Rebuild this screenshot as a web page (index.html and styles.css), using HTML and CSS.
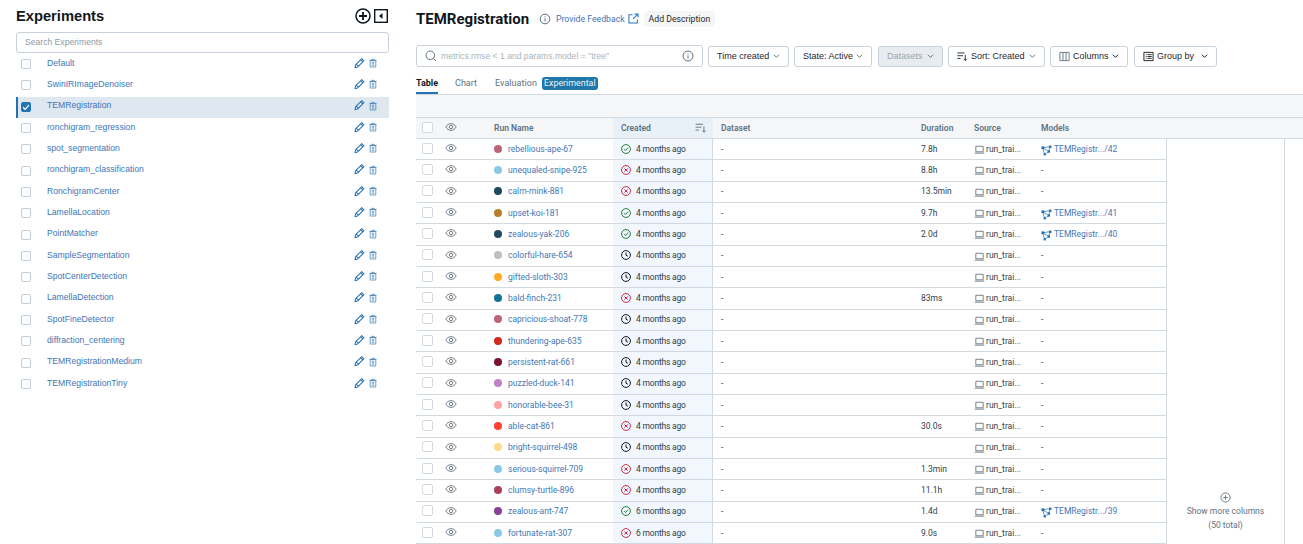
FILE: index.html
```html
<!DOCTYPE html>
<html lang="en">
<head>
  <meta charset="UTF-8" />
  <title>TEMRegistration - Experiments</title>
  <link rel="stylesheet" href="styles.css">
</head>
<body>
  <svg class="defs" width="0" height="0">
    <symbol id="i-pencil" viewBox="0 0 12 12"><path d="M8.4 1.3 10.7 3.6 4 10.3 1.2 10.9 1.7 8zM7.2 2.5 9.5 4.8M2.6 7.3 4.7 9.4" fill="none" stroke="currentColor" stroke-width="1.1"/></symbol>
    <symbol id="i-trash" viewBox="0 0 10 12"><path d="M1.5 3h7v8h-7zM3.5 3V1.4h3V3M.5 2.7h9M3.5 5.2h3M3.5 7h3M3.5 8.8h3" fill="none" stroke="currentColor" stroke-width="1"/></symbol>
    <symbol id="i-eye" viewBox="0 0 14 14"><path d="M1 7c1.400-2.600 3.500-3.900 6-3.900S11.600 4.400 13 7c-1.400 2.600-3.500 3.900-6 3.900S2.400 9.600 1 7z" fill="none" stroke="currentColor"/><circle cx="7" cy="7" r="2" fill="none" stroke="currentColor"/></symbol>
    <symbol id="i-ok" viewBox="0 0 12 12"><circle cx="6" cy="6" r="5.300" fill="none" stroke="currentColor" stroke-width="1.200"/><path d="M3.600 6.100 5.400 7.900 8.500 4.300" fill="none" stroke="currentColor" stroke-width="1.200"/></symbol>
    <symbol id="i-fail" viewBox="0 0 12 12"><circle cx="6" cy="6" r="5.300" fill="none" stroke="currentColor" stroke-width="1.200"/><path d="M4.100 4.100 7.900 7.900M7.900 4.100 4.100 7.900" fill="none" stroke="currentColor" stroke-width="1.200"/></symbol>
    <symbol id="i-clock" viewBox="0 0 12 12"><circle cx="6" cy="6" r="5.300" fill="none" stroke="currentColor" stroke-width="1.200"/><path d="M6 3V6.300L8.200 7.500" fill="none" stroke="currentColor" stroke-width="1.200"/></symbol>
    <symbol id="i-laptop" viewBox="0 0 12 12"><path d="M2 2.500h8v6H2zM.8 10h10.400" fill="none" stroke="currentColor"/></symbol>
    <symbol id="i-model" viewBox="0 0 12 12"><path d="M1.800 3 10 1.800 8.500 7 4 10.200zM1.800 3 8.500 7" fill="none" stroke="currentColor" stroke-width=".8"/><rect x=".5" y="1.500" width="3" height="3" fill="currentColor"/><rect x="8.800" y=".6" width="2.600" height="2.600" fill="currentColor"/><rect x="7.300" y="5.800" width="2.600" height="2.600" fill="currentColor"/><rect x="2.900" y="9" width="2.400" height="2.400" fill="currentColor"/></symbol>
    <symbol id="i-sort" viewBox="0 0 14 12"><path d="M.5 1.500h9M.5 5h7M.5 8.500h4M10.500 4v7M8.500 9l2 2 2-2" fill="none" stroke="currentColor" stroke-width="1.100"/></symbol>
    <symbol id="i-chev" viewBox="0 0 8 6"><path d="M1 1.500 4 4.500 7 1.500" fill="none" stroke="currentColor" stroke-width="1.100"/></symbol>
  </svg>

  <div class="page">
    <aside class="sidebar">
      <div class="side-head">
        <h1>Experiments</h1>
        <div class="side-tools">
          <svg class="add" viewBox="0 0 16 16" width="16" height="16"><circle cx="8" cy="8" r="7" fill="none" stroke="#11171c" stroke-width="1.500"/><path d="M8 4v8M4 8h8" stroke="#11171c" stroke-width="1.800"/></svg>
          <svg viewBox="0 0 14 14" width="14" height="14"><rect x=".7" y=".7" width="12.600" height="12.600" fill="none" stroke="#11171c" stroke-width="1.400"/><path d="M8.500 4v6L5 7z" fill="#11171c"/></svg>
        </div>
      </div>
      <div class="search-exp">Search Experiments</div>
      <ul class="exp-list">
        <li><span class="box"></span><span class="exp-name">Default</span><svg class="pen"><use href="#i-pencil"/></svg><svg class="bin"><use href="#i-trash"/></svg></li>
        <li><span class="box"></span><span class="exp-name">SwinIRImageDenoiser</span><svg class="pen"><use href="#i-pencil"/></svg><svg class="bin"><use href="#i-trash"/></svg></li>
        <li class="active"><span class="box checked"><svg viewBox="0 0 10 10" width="10" height="10"><path d="M2 5.200 4.200 7.300 8 2.900" fill="none" stroke="#fff" stroke-width="1.300"/></svg></span><span class="exp-name">TEMRegistration</span><svg class="pen"><use href="#i-pencil"/></svg><svg class="bin"><use href="#i-trash"/></svg></li>
        <li><span class="box"></span><span class="exp-name">ronchigram_regression</span><svg class="pen"><use href="#i-pencil"/></svg><svg class="bin"><use href="#i-trash"/></svg></li>
        <li><span class="box"></span><span class="exp-name">spot_segmentation</span><svg class="pen"><use href="#i-pencil"/></svg><svg class="bin"><use href="#i-trash"/></svg></li>
        <li><span class="box"></span><span class="exp-name">ronchigram_classification</span><svg class="pen"><use href="#i-pencil"/></svg><svg class="bin"><use href="#i-trash"/></svg></li>
        <li><span class="box"></span><span class="exp-name">RonchigramCenter</span><svg class="pen"><use href="#i-pencil"/></svg><svg class="bin"><use href="#i-trash"/></svg></li>
        <li><span class="box"></span><span class="exp-name">LamellaLocation</span><svg class="pen"><use href="#i-pencil"/></svg><svg class="bin"><use href="#i-trash"/></svg></li>
        <li><span class="box"></span><span class="exp-name">PointMatcher</span><svg class="pen"><use href="#i-pencil"/></svg><svg class="bin"><use href="#i-trash"/></svg></li>
        <li><span class="box"></span><span class="exp-name">SampleSegmentation</span><svg class="pen"><use href="#i-pencil"/></svg><svg class="bin"><use href="#i-trash"/></svg></li>
        <li><span class="box"></span><span class="exp-name">SpotCenterDetection</span><svg class="pen"><use href="#i-pencil"/></svg><svg class="bin"><use href="#i-trash"/></svg></li>
        <li><span class="box"></span><span class="exp-name">LamellaDetection</span><svg class="pen"><use href="#i-pencil"/></svg><svg class="bin"><use href="#i-trash"/></svg></li>
        <li><span class="box"></span><span class="exp-name">SpotFineDetector</span><svg class="pen"><use href="#i-pencil"/></svg><svg class="bin"><use href="#i-trash"/></svg></li>
        <li><span class="box"></span><span class="exp-name">diffraction_centering</span><svg class="pen"><use href="#i-pencil"/></svg><svg class="bin"><use href="#i-trash"/></svg></li>
        <li><span class="box"></span><span class="exp-name">TEMRegistrationMedium</span><svg class="pen"><use href="#i-pencil"/></svg><svg class="bin"><use href="#i-trash"/></svg></li>
        <li><span class="box"></span><span class="exp-name">TEMRegistrationTiny</span><svg class="pen"><use href="#i-pencil"/></svg><svg class="bin"><use href="#i-trash"/></svg></li>
      </ul>
    </aside>

    <main class="main">
      <div class="title-row">
        <h2>TEMRegistration</h2>
        <svg class="title-info" viewBox="0 0 12 12" width="12" height="12"><circle cx="6" cy="6" r="4.800" fill="none" stroke="#5f7281"/><path d="M6 5.300v3.200M6 3.400v1" stroke="#5f7281"/></svg>
        <a class="feedback">Provide Feedback</a>
        <svg class="ext" viewBox="0 0 12 12" width="11" height="11"><path d="M5 1.800H1v9.200h9.200V7M7 1h4v4M11 1 5.500 6.500" fill="none" stroke="#2374bb" stroke-width="1.100"/></svg>
        <span class="add-desc">Add Description</span>
      </div>

      <div class="toolbar">
        <div class="run-search">
          <svg viewBox="0 0 12 12" width="12" height="12"><circle cx="5.300" cy="5.300" r="4.300" fill="none" stroke="#5f7281"/><path d="M8.500 8.500 11 11" stroke="#5f7281"/></svg>
          <span class="run-ph">metrics.rmse &lt; 1 and params.model = "tree"</span>
          <svg class="run-info" viewBox="0 0 12 12" width="12" height="12"><circle cx="6" cy="6" r="5" fill="none" stroke="#5f7281"/><path d="M6 5.300v3.200M6 3.400v1" stroke="#5f7281"/></svg>
        </div>
        <button class="tb w-time">Time created<svg class="chev"><use href="#i-chev"/></svg></button>
        <button class="tb w-state">State: Active<svg class="chev"><use href="#i-chev"/></svg></button>
        <button class="tb w-data off">Datasets<svg class="chev"><use href="#i-chev"/></svg></button>
        <button class="tb w-sort"><svg class="tb-icon"><use href="#i-sort"/></svg>Sort: Created<svg class="chev"><use href="#i-chev"/></svg></button>
        <button class="tb w-cols"><svg class="tb-icon" viewBox="0 0 12 12"><path d="M1 1.500h10v9H1zM4.300 1.500v9M7.700 1.500v9" fill="none" stroke="#5f7281"/></svg>Columns<svg class="chev dark"><use href="#i-chev"/></svg></button>
        <button class="tb w-group"><svg class="tb-icon" viewBox="0 0 12 12"><path d="M1 1.500h10v9H1zM3 4h1M5 4h4.500M3 6h1M5 6h4.500M3 8h1M5 8h4.500" fill="none" stroke="#11171c"/></svg>Group by<svg class="chev dark"><use href="#i-chev"/></svg></button>
      </div>

      <div class="tabs">
        <span class="tab on">Table</span>
        <span class="tab">Chart</span>
        <span class="tab">Evaluation</span>
        <span class="pill">Experimental</span>
      </div>

      <div class="band"></div>

      <div class="grid-wrap">
        <div class="runs">
          <div class="row head">
            <span class="c-check"><span class="sq"></span></span>
            <span class="c-eye"><svg class="eye"><use href="#i-eye"/></svg></span>
            <span class="c-name">Run Name</span>
            <span class="c-created">Created<svg class="sort-small"><use href="#i-sort"/></svg></span>
            <span class="c-data">Dataset</span>
            <span class="c-dur">Duration</span>
            <span class="c-src">Source</span>
            <span class="c-model">Models</span>
          </div>
          <div class="row"><span class="c-check"><span class="sq"></span></span><span class="c-eye"><svg class="eye"><use href="#i-eye"/></svg></span><span class="c-name"><i class="dot d1"></i><a>rebellious-ape-67</a></span><span class="c-created"><svg class="st ok"><use href="#i-ok"/></svg>4 months ago</span><span class="c-data">-</span><span class="c-dur">7.8h</span><span class="c-src"><svg class="lap"><use href="#i-laptop"/></svg>run_trai...</span><span class="c-model"><svg class="mod"><use href="#i-model"/></svg><a>TEMRegistr.../42</a></span></div>
          <div class="row"><span class="c-check"><span class="sq"></span></span><span class="c-eye"><svg class="eye"><use href="#i-eye"/></svg></span><span class="c-name"><i class="dot d2"></i><a>unequaled-snipe-925</a></span><span class="c-created"><svg class="st fail"><use href="#i-fail"/></svg>4 months ago</span><span class="c-data">-</span><span class="c-dur">8.8h</span><span class="c-src"><svg class="lap"><use href="#i-laptop"/></svg>run_trai...</span><span class="c-model">-</span></div>
          <div class="row"><span class="c-check"><span class="sq"></span></span><span class="c-eye"><svg class="eye"><use href="#i-eye"/></svg></span><span class="c-name"><i class="dot d3"></i><a>calm-mink-881</a></span><span class="c-created"><svg class="st fail"><use href="#i-fail"/></svg>4 months ago</span><span class="c-data">-</span><span class="c-dur">13.5min</span><span class="c-src"><svg class="lap"><use href="#i-laptop"/></svg>run_trai...</span><span class="c-model">-</span></div>
          <div class="row"><span class="c-check"><span class="sq"></span></span><span class="c-eye"><svg class="eye"><use href="#i-eye"/></svg></span><span class="c-name"><i class="dot d4"></i><a>upset-koi-181</a></span><span class="c-created"><svg class="st ok"><use href="#i-ok"/></svg>4 months ago</span><span class="c-data">-</span><span class="c-dur">9.7h</span><span class="c-src"><svg class="lap"><use href="#i-laptop"/></svg>run_trai...</span><span class="c-model"><svg class="mod"><use href="#i-model"/></svg><a>TEMRegistr.../41</a></span></div>
          <div class="row"><span class="c-check"><span class="sq"></span></span><span class="c-eye"><svg class="eye"><use href="#i-eye"/></svg></span><span class="c-name"><i class="dot d3"></i><a>zealous-yak-206</a></span><span class="c-created"><svg class="st ok"><use href="#i-ok"/></svg>4 months ago</span><span class="c-data">-</span><span class="c-dur">2.0d</span><span class="c-src"><svg class="lap"><use href="#i-laptop"/></svg>run_trai...</span><span class="c-model"><svg class="mod"><use href="#i-model"/></svg><a>TEMRegistr.../40</a></span></div>
          <div class="row"><span class="c-check"><span class="sq"></span></span><span class="c-eye"><svg class="eye"><use href="#i-eye"/></svg></span><span class="c-name"><i class="dot d5"></i><a>colorful-hare-654</a></span><span class="c-created"><svg class="st"><use href="#i-clock"/></svg>4 months ago</span><span class="c-data">-</span><span class="c-dur"></span><span class="c-src"><svg class="lap"><use href="#i-laptop"/></svg>run_trai...</span><span class="c-model">-</span></div>
          <div class="row"><span class="c-check"><span class="sq"></span></span><span class="c-eye"><svg class="eye"><use href="#i-eye"/></svg></span><span class="c-name"><i class="dot d6"></i><a>gifted-sloth-303</a></span><span class="c-created"><svg class="st"><use href="#i-clock"/></svg>4 months ago</span><span class="c-data">-</span><span class="c-dur"></span><span class="c-src"><svg class="lap"><use href="#i-laptop"/></svg>run_trai...</span><span class="c-model">-</span></div>
          <div class="row"><span class="c-check"><span class="sq"></span></span><span class="c-eye"><svg class="eye"><use href="#i-eye"/></svg></span><span class="c-name"><i class="dot d7"></i><a>bald-finch-231</a></span><span class="c-created"><svg class="st fail"><use href="#i-fail"/></svg>4 months ago</span><span class="c-data">-</span><span class="c-dur">83ms</span><span class="c-src"><svg class="lap"><use href="#i-laptop"/></svg>run_trai...</span><span class="c-model">-</span></div>
          <div class="row"><span class="c-check"><span class="sq"></span></span><span class="c-eye"><svg class="eye"><use href="#i-eye"/></svg></span><span class="c-name"><i class="dot d1"></i><a>capricious-shoat-778</a></span><span class="c-created"><svg class="st"><use href="#i-clock"/></svg>4 months ago</span><span class="c-data">-</span><span class="c-dur"></span><span class="c-src"><svg class="lap"><use href="#i-laptop"/></svg>run_trai...</span><span class="c-model">-</span></div>
          <div class="row"><span class="c-check"><span class="sq"></span></span><span class="c-eye"><svg class="eye"><use href="#i-eye"/></svg></span><span class="c-name"><i class="dot d8"></i><a>thundering-ape-635</a></span><span class="c-created"><svg class="st"><use href="#i-clock"/></svg>4 months ago</span><span class="c-data">-</span><span class="c-dur"></span><span class="c-src"><svg class="lap"><use href="#i-laptop"/></svg>run_trai...</span><span class="c-model">-</span></div>
          <div class="row"><span class="c-check"><span class="sq"></span></span><span class="c-eye"><svg class="eye"><use href="#i-eye"/></svg></span><span class="c-name"><i class="dot d9"></i><a>persistent-rat-661</a></span><span class="c-created"><svg class="st"><use href="#i-clock"/></svg>4 months ago</span><span class="c-data">-</span><span class="c-dur"></span><span class="c-src"><svg class="lap"><use href="#i-laptop"/></svg>run_trai...</span><span class="c-model">-</span></div>
          <div class="row"><span class="c-check"><span class="sq"></span></span><span class="c-eye"><svg class="eye"><use href="#i-eye"/></svg></span><span class="c-name"><i class="dot d10"></i><a>puzzled-duck-141</a></span><span class="c-created"><svg class="st"><use href="#i-clock"/></svg>4 months ago</span><span class="c-data">-</span><span class="c-dur"></span><span class="c-src"><svg class="lap"><use href="#i-laptop"/></svg>run_trai...</span><span class="c-model">-</span></div>
          <div class="row"><span class="c-check"><span class="sq"></span></span><span class="c-eye"><svg class="eye"><use href="#i-eye"/></svg></span><span class="c-name"><i class="dot d11"></i><a>honorable-bee-31</a></span><span class="c-created"><svg class="st"><use href="#i-clock"/></svg>4 months ago</span><span class="c-data">-</span><span class="c-dur"></span><span class="c-src"><svg class="lap"><use href="#i-laptop"/></svg>run_trai...</span><span class="c-model">-</span></div>
          <div class="row"><span class="c-check"><span class="sq"></span></span><span class="c-eye"><svg class="eye"><use href="#i-eye"/></svg></span><span class="c-name"><i class="dot d12"></i><a>able-cat-861</a></span><span class="c-created"><svg class="st fail"><use href="#i-fail"/></svg>4 months ago</span><span class="c-data">-</span><span class="c-dur">30.0s</span><span class="c-src"><svg class="lap"><use href="#i-laptop"/></svg>run_trai...</span><span class="c-model">-</span></div>
          <div class="row"><span class="c-check"><span class="sq"></span></span><span class="c-eye"><svg class="eye"><use href="#i-eye"/></svg></span><span class="c-name"><i class="dot d13"></i><a>bright-squirrel-498</a></span><span class="c-created"><svg class="st"><use href="#i-clock"/></svg>4 months ago</span><span class="c-data">-</span><span class="c-dur"></span><span class="c-src"><svg class="lap"><use href="#i-laptop"/></svg>run_trai...</span><span class="c-model">-</span></div>
          <div class="row"><span class="c-check"><span class="sq"></span></span><span class="c-eye"><svg class="eye"><use href="#i-eye"/></svg></span><span class="c-name"><i class="dot d2"></i><a>serious-squirrel-709</a></span><span class="c-created"><svg class="st fail"><use href="#i-fail"/></svg>4 months ago</span><span class="c-data">-</span><span class="c-dur">1.3min</span><span class="c-src"><svg class="lap"><use href="#i-laptop"/></svg>run_trai...</span><span class="c-model">-</span></div>
          <div class="row"><span class="c-check"><span class="sq"></span></span><span class="c-eye"><svg class="eye"><use href="#i-eye"/></svg></span><span class="c-name"><i class="dot d14"></i><a>clumsy-turtle-896</a></span><span class="c-created"><svg class="st fail"><use href="#i-fail"/></svg>4 months ago</span><span class="c-data">-</span><span class="c-dur">11.1h</span><span class="c-src"><svg class="lap"><use href="#i-laptop"/></svg>run_trai...</span><span class="c-model">-</span></div>
          <div class="row"><span class="c-check"><span class="sq"></span></span><span class="c-eye"><svg class="eye"><use href="#i-eye"/></svg></span><span class="c-name"><i class="dot d15"></i><a>zealous-ant-747</a></span><span class="c-created"><svg class="st ok"><use href="#i-ok"/></svg>6 months ago</span><span class="c-data">-</span><span class="c-dur">1.4d</span><span class="c-src"><svg class="lap"><use href="#i-laptop"/></svg>run_trai...</span><span class="c-model"><svg class="mod"><use href="#i-model"/></svg><a>TEMRegistr.../39</a></span></div>
          <div class="row"><span class="c-check"><span class="sq"></span></span><span class="c-eye"><svg class="eye"><use href="#i-eye"/></svg></span><span class="c-name"><i class="dot d2"></i><a>fortunate-rat-307</a></span><span class="c-created"><svg class="st fail"><use href="#i-fail"/></svg>6 months ago</span><span class="c-data">-</span><span class="c-dur">9.0s</span><span class="c-src"><svg class="lap"><use href="#i-laptop"/></svg>run_trai...</span><span class="c-model">-</span></div>
        </div>
        <div class="more-col">
          <div class="more-head"></div>
          <div class="more-body">
            <svg viewBox="0 0 12 12" width="11" height="11"><circle cx="6" cy="6" r="5" fill="none" stroke="#5f7281"/><path d="M6 3.500v5M3.500 6h5" stroke="#5f7281"/></svg>
            <span class="more-first">Show more columns</span>
            <span>(50 total)</span>
          </div>
        </div>
        <div class="edge">
          <div class="more-head"></div>
        </div>
      </div>
    </main>
  </div>
</body>
</html>
```

FILE: styles.css
```css
* { box-sizing: border-box; }
html, body { margin: 0; height: 544px; overflow: hidden; background: #fff; }
body { font-family: "Liberation Sans", Arial, sans-serif; color: #11171c; }
.defs { position: absolute; }
.page { display: flex; height: 544px; }

/* left panel */
.sidebar { width: 416px; padding: 0 27px 0 16px; flex: none; }
.side-head { display: flex; justify-content: space-between; align-items: center; height: 32px; }
.sidebar h1 { margin: 0; font-size: 14.700px; line-height: 35px; font-weight: 700; }
.side-tools { display: flex; align-items: center; gap: 3px; padding-right: 1px; }
.search-exp { height: 21px; border: 1px solid #c7d2dc; border-radius: 3px; padding-left: 8px; font-size: 8.600px; line-height: 19px; color: #8c9aa5; }
.exp-list { list-style: none; margin: 1px 0 0; padding: 0; }
.exp-list li { display: flex; align-items: center; height: 21.33px; padding: 0 12px 0 5px; }
.exp-list li.active { background: #dfe7f1; border-left: 2px solid #2272b4; padding-left: 3px; }
.box { width: 10px; height: 10px; border: 1px solid #c0cdd8; border-radius: 2px; background: #fff; margin-top: -1px; flex: none; display: block; }
.box.checked { background: #2272b4; border-color: #2272b4; }
.box.checked svg { display: block; margin: -1px; }
.exp-name { flex: 1; margin-left: 16px; font-size: 8.650px; color: #3d76b8; margin-top: -4px; }
.pen { width: 11px; height: 12px; color: #2272b4; margin-top: -4px; }
.bin { width: 8px; height: 10px; margin-left: 4px; color: #4e86b8; margin-top: -3px; }

/* main */
.main { flex: 1; min-width: 0; }
.title-row { display: flex; align-items: center; height: 36px; padding-top: 1px; font-family: Roboto, sans-serif; }
.title-row h2 { margin: 0; font-size: 15px; font-weight: 700; width: 118px; }
.title-info { margin-left: 5px; }
.feedback { margin-left: 5px; font-size: 8.700px; color: #3d76b8; }
.ext { margin-left: 3px; }
.add-desc { margin-left: 5px; height: 16px; padding: 0 5px; background: #f5f6f7; border-radius: 3px; font-size: 8.700px; line-height: 16px; color: #1f272d; }

.toolbar { display: flex; align-items: center; gap: 5px; margin-top: 9px; height: 22px; }
.run-search { width: 287px; height: 22px; display: flex; align-items: center; border: 1px solid #c7d2dc; border-radius: 3px; padding: 0 8px; }
.run-ph { flex: 1; margin-left: 4px; font-size: 8.600px; color: #aab5bd; }
.tb { display: flex; align-items: center; justify-content: space-between; height: 21px; padding: 0 8px; border: 1px solid #c7d2dc; border-radius: 3px; background: #fff; font-family: "Liberation Sans", sans-serif; font-size: 9px; color: #1f272d; }
.w-time { width: 81px; }
.w-state { width: 78px; }
.w-data { width: 65px; background: #e8ecf0; color: #9aa7b2; margin-left: 1px; }
.w-sort { width: 97px; }
.w-cols { width: 78px; }
.w-group { width: 83px; margin-left: 1px; }
.tb-icon { width: 11px; height: 11px; color: #11171c; flex: none; margin-right: 3px; }
.chev { width: 7px; height: 6px; margin-left: auto; color: #5f7281; flex: none; }
.chev.dark { color: #11171c; }

.tabs { display: flex; align-items: flex-start; height: 28px; border-bottom: 1px solid #d1d9e1; font-family: Roboto, sans-serif; font-size: 9px; color: #5f7281; }
.tab { height: 27px; line-height: 32px; margin-right: 17px; }
.tab.on { font-weight: 700; color: #11171c; border-bottom: 2px solid #2272b4; }
.tab:nth-child(3) { margin: 0 5px 0 1px; letter-spacing: .05px; }
.pill { height: 13px; margin-top: 10px; padding: 0 2px; background: #2077a9; border-radius: 3px; color: #e8f2f9; font-size: 8.900px; line-height: 13px; }

.band { height: 23px; background: #f5f6f8; border-bottom: 1px solid #d1d9e1; }

.grid-wrap { display: flex; }
.runs { width: 750px; flex: none; font-family: Roboto, sans-serif; font-size: 8.500px; color: #333f48; }
.row { display: flex; align-items: center; height: 21.33px; border-bottom: 1px solid #d1d9e1; }
.row.head { height: 21px; background: #f5f6f8; color: #5f7281; font-weight: 600; }
.row > span { display: flex; align-items: center; height: 100%; flex: none; white-space: nowrap; padding-bottom: 1px; }
.row > .c-check, .row > .c-eye { padding-bottom: 2px; }
.head > span { padding-bottom: 0; }
.c-check { width: 28px; padding-left: 6px; }
.c-eye { width: 50px; }
.c-name { width: 119px; }
.c-created { width: 100px; background: #f1f7fd; padding-left: 8px; border-right: 1px solid #d1d9e1; letter-spacing: -.2px; }
.head .c-created { background: #e8f0f8; border-right: 0; letter-spacing: 0; }
.c-data { width: 208px; padding-left: 8px; }
.c-dur { width: 53px; }
.c-src { width: 67px; }
.c-model { width: 125px; }
.sq { display: block; width: 11px; height: 11px; border: 1px solid #d1d9e1; border-radius: 2px; background: #fff; }
.eye { width: 12px; height: 12px; color: #5f6b75; margin-left: 1px; }
.sort-small { width: 12px; height: 10px; color: #5f7281; margin-left: auto; margin-right: 6px; }
.dot { width: 8px; height: 8px; border-radius: 50%; flex: none; margin-right: 6px; }
.row a { color: #4577b4; }
.st { width: 10px; height: 10px; margin-right: 5px; color: #11171c; flex: none; }
.st.ok { color: #277c43; }
.st.fail { color: #c82d4c; }
.lap { width: 11px; height: 11px; color: #6b7782; margin: 2px 1px 0 0; flex: none; }
.mod { width: 11px; height: 11px; color: #2272b4; margin: 3px 2px 0 0; flex: none; }

.d1 { background: #bc6478; }
.d2 { background: #8bc7e6; }
.d3 { background: #1f4a5f; }
.d4 { background: #b77f2c; }
.d5 { background: #bebebe; }
.d6 { background: #ffab24; }
.d7 { background: #14739a; }
.d8 { background: #d52a1e; }
.d9 { background: #7a1236; }
.d10 { background: #c083c4; }
.d11 { background: #ffa3a3; }
.d12 { background: #ff3f2f; }
.d13 { background: #ffdb8e; }
.d14 { background: #a9405a; }
.d15 { background: #8c3f97; }

.more-col { width: 119px; flex: none; height: 430px; display: flex; flex-direction: column; }
.more-head { height: 21px; background: #f5f6f8; border-bottom: 1px solid #d1d9e1; }
.more-body { flex: 1; display: flex; flex-direction: column; align-items: center; justify-content: flex-end; padding-bottom: 16px; border-left: 1px solid #d1d9e1; border-right: 1px solid #d1d9e1; font-family: Roboto, sans-serif; font-size: 8.500px; line-height: 14px; color: #5f7281; }
.more-first { margin-top: 1px; }
.edge { flex: 1; }
```
